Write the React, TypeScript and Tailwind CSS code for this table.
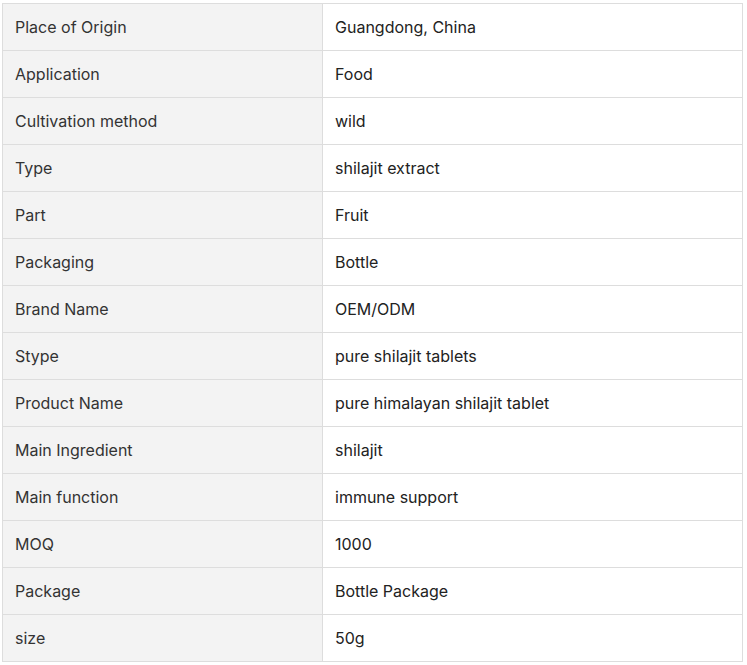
import React from "react";

const rows: [string, string][] = [
  ["Place of Origin", "Guangdong, China"],
  ["Application", "Food"],
  ["Cultivation method", "wild"],
  ["Type", "shilajit extract"],
  ["Part", "Fruit"],
  ["Packaging", "Bottle"],
  ["Brand Name", "OEM/ODM"],
  ["Stype", "pure shilajit tablets"],
  ["Product Name", "pure himalayan shilajit tablet"],
  ["Main Ingredient", "shilajit"],
  ["Main function", "immune support"],
  ["MOQ", "1000"],
  ["Package", "Bottle Package"],
  ["size", "50g"],
];

export default function App() {
  return (
    <div className="bg-white pl-[2px] pt-[3px] font-['Inter',sans-serif] text-[16px] text-[#333]">
      <table className="w-[741px] border-collapse border border-[#dddddd]">
        <tbody>
          {rows.map(([k, v]) => (
            <tr key={k} className="h-[47px]">
              <td className="w-[320px] border border-[#dddddd] bg-[#f3f3f3] px-3 align-middle">
                {k}
              </td>
              <td className="border border-[#dddddd] px-3 align-middle text-[#222]">{v}</td>
            </tr>
          ))}
        </tbody>
      </table>
    </div>
  );
}
